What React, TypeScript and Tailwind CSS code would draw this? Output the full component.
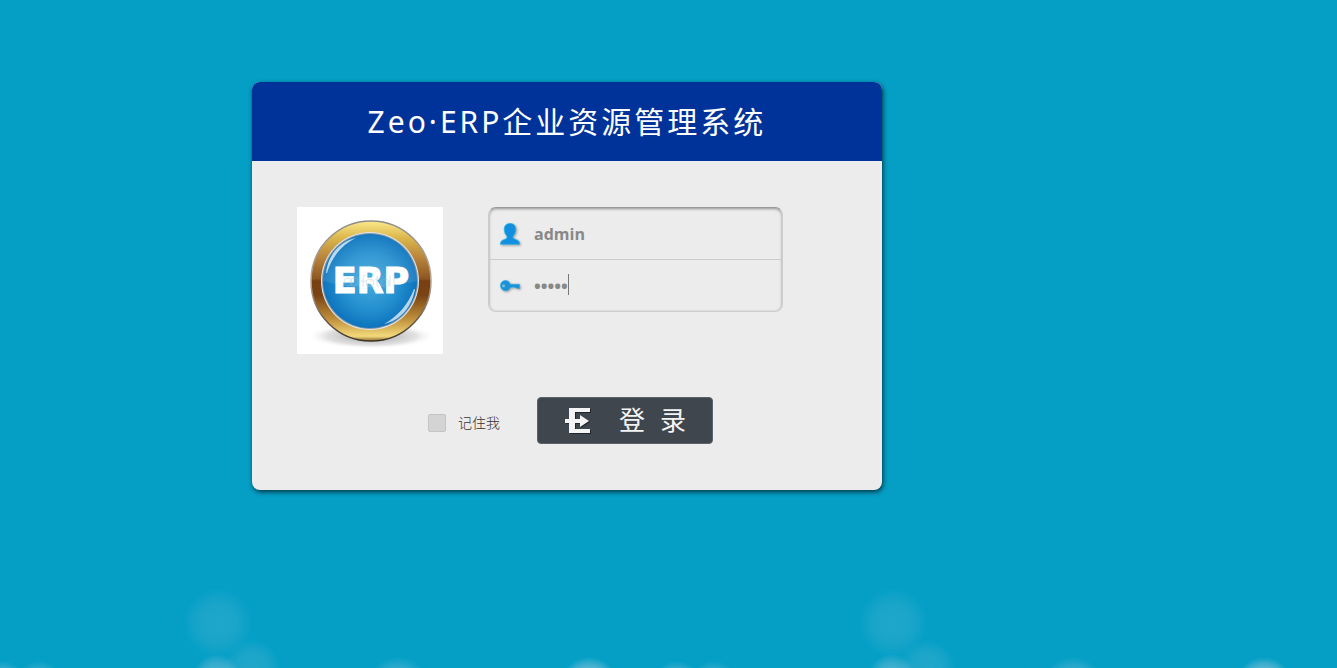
import React, { useState } from 'react';

// Soft light spots, repeated across the bottom of the page
const TILE_WIDTH = 675;

const spots = [
  { cx: 218, cy: 43, r: 34, opacity: 0.15 },
  { cx: 252, cy: 88, r: 28, opacity: 0.16 },
  { cx: 217, cy: 98, r: 24, opacity: 0.38 },
  { cx: 2, cy: 105, r: 24, opacity: 0.36 },
  { cx: 677, cy: 105, r: 24, opacity: 0.36 },
  { cx: 39, cy: 105, r: 24, opacity: 0.3 },
  { cx: 398, cy: 108, r: 31, opacity: 0.34 },
  { cx: 589, cy: 106, r: 29, opacity: 0.65 },
];

function Bokeh() {
  return (
    <svg className="pointer-events-none absolute bottom-0 left-0 -z-10 h-[88px] w-full" aria-hidden="true">
      <defs>
        <radialGradient id="spot">
          <stop offset="0" stopColor="#b4cfe0" />
          <stop offset="0.5" stopColor="#b4cfe0" stopOpacity="0.85" />
          <stop offset="0.75" stopColor="#b4cfe0" stopOpacity="0.5" />
          <stop offset="1" stopColor="#b4cfe0" stopOpacity="0" />
        </radialGradient>
        <pattern id="spots" width={TILE_WIDTH} height="88" patternUnits="userSpaceOnUse">
          {spots.map(spot => (
            <circle key={spot.cx} cx={spot.cx} cy={spot.cy} r={spot.r} fill="url(#spot)" opacity={spot.opacity} />
          ))}
        </pattern>
      </defs>
      <rect width="100%" height="88" fill="url(#spots)" />
    </svg>
  );
}

function ErpLogo() {
  return (
    <svg className="h-[147px] w-[146px] shrink-0 bg-white" viewBox="0 0 146 147" role="img" aria-label="ERP">
      <defs>
        <linearGradient id="ring" x1="0" y1="0" x2="0" y2="1">
          <stop offset="0" stopColor="#fbe88b" />
          <stop offset="0.14" stopColor="#dcb74c" />
          <stop offset="0.32" stopColor="#b5803a" />
          <stop offset="0.48" stopColor="#8f5720" />
          <stop offset="0.5" stopColor="#773f12" />
          <stop offset="0.62" stopColor="#7a4314" />
          <stop offset="0.82" stopColor="#c0913c" />
          <stop offset="0.96" stopColor="#f3d97c" />
          <stop offset="1" stopColor="#8a6a30" />
        </linearGradient>
        <linearGradient id="rim" x1="0" y1="0" x2="0" y2="1">
          <stop offset="0" stopColor="#8c8c8c" />
          <stop offset="0.5" stopColor="#b9a695" />
          <stop offset="1" stopColor="#3d3323" />
        </linearGradient>
        <radialGradient id="disc">
          <stop offset="0" stopColor="#46aadd" />
          <stop offset="0.6" stopColor="#2590cf" />
          <stop offset="1" stopColor="#0d74bd" />
        </radialGradient>
        <radialGradient id="ground">
          <stop offset="0" stopColor="#555555" stopOpacity="0.6" />
          <stop offset="0.7" stopColor="#888888" stopOpacity="0.25" />
          <stop offset="1" stopColor="#ffffff" stopOpacity="0" />
        </radialGradient>
        <linearGradient id="gloss" x1="0" y1="0" x2="0" y2="1">
          <stop offset="0" stopColor="#ffffff" stopOpacity="0.04" />
          <stop offset="1" stopColor="#ffffff" stopOpacity="0.1" />
        </linearGradient>
      </defs>
      <ellipse cx="74" cy="129" rx="64" ry="13" fill="url(#ground)" />
      <circle cx="74" cy="74" r="60" fill="url(#ring)" stroke="url(#rim)" strokeWidth="1.5" />
      <circle cx="73" cy="74" r="49" fill="#dfe4e8" />
      <circle cx="73" cy="74" r="48" fill="#8a99a6" />
      <circle cx="73" cy="74" r="47" fill="url(#disc)" />
      <path d="M26 74a47 47 0 0 1 94 0q-47 12-94 0z" fill="url(#gloss)" />
      <path d="M29 66C31 48 43 34 59 31 46 37 35 49 30 66z" fill="#ffffff" opacity="0.7" />
      <path d="M118 82C115 100 103 114 87 117 100 110 111 98 117 82z" fill="#ffffff" opacity="0.7" />
      <text
        x="74"
        y="86"
        textAnchor="middle"
        fontSize="35"
        fontWeight="700"
        fill="#ffffff"
        stroke="#ffffff"
        strokeWidth="1.2"
        className="font-['DejaVu_Sans']"
      >
        ERP
      </text>
      <g fill="none" stroke="#9fb9cc" strokeWidth="1" opacity="0.35">
        <circle cx="51" cy="75" r="4" />
        <circle cx="57" cy="75" r="4" />
        <path d="M66 80v-9q0-3 3-3M64 74h5M80 69v9q0 2 2 2M78 72h5M93 68v12M97 72v8" />
        <circle cx="73" cy="76" r="4" />
        <circle cx="88" cy="76" r="4" />
      </g>
    </svg>
  );
}

function UserIcon() {
  return (
    <svg className="h-[22px] w-5 shrink-0 drop-shadow-[1px_1px_1px_#00000055]" viewBox="0 0 20 22" aria-hidden="true">
      <path
        d="M10 .5C6.200 .5 4 2.900 4.300 6.800C4.500 9.500 5.500 11.700 7 13V15.200C5 16.400 2.300 16.700 1 18.500C.6 19.200 .5 20.200 .5 21.300H19.500C19.500 20.200 19.400 19.200 19 18.500C17.700 16.700 15 16.400 13 15.200V13C14.500 11.700 15.500 9.500 15.700 6.800C16 2.900 13.800 .5 10 .5Z"
        fill="#128fdf"
        stroke="#1eb6ee"
        strokeWidth="0.7"
      />
    </svg>
  );
}

function KeyIcon() {
  return (
    <svg className="h-[14px] w-5 shrink-0 drop-shadow-[1px_1px_1px_#00000055]" viewBox="0 0 20 14" aria-hidden="true">
      <path
        d="M5.500 1.500C2.500 1.500.5 3.800.5 6.600C.5 9.500 2.600 11.800 5.500 11.800C7.900 11.800 9.600 10.300 10.200 8.400L12 8.400L13 7.800L14 8.400L16 8.400L17 9.500H19.500V5.200H10.200C9.500 3 7.900 1.500 5.500 1.500ZM3.600 5.300A1.500 1.500 0 1 1 3.600 8.300A1.500 1.500 0 1 1 3.600 5.300Z"
        fill="#1b92d8"
        fillRule="evenodd"
        stroke="#25b4ea"
        strokeWidth="0.6"
      />
    </svg>
  );
}

function LoginIcon() {
  return (
    <svg className="h-[26px] w-[26px] drop-shadow-[1px_1px_0px_#20252b]" viewBox="0 0 26 26" fill="#f4f4f4" aria-hidden="true">
      <path d="M4 0h21v4H10v7h5V7l9 6-9 6v-4h-5v6h15v4H4V15H0v-4h4z" />
    </svg>
  );
}

const App: React.FC = () => {
  const [username, setUsername] = useState('admin');
  const [password, setPassword] = useState('admin');
  const [remember, setRemember] = useState(false);

  return (
    <div className="relative isolate min-h-screen bg-[#059fc6] pt-[82px] pb-20 pl-[252px] font-['Noto_Sans','Noto_Sans_CJK_SC',sans-serif]">
      <Bokeh />
      <main className="w-full max-w-[630px] overflow-hidden rounded-lg bg-[#ececec] shadow-[1px_2px_5px_#000000aa]">
        <h1 className="bg-[#003399] py-5 text-center text-3xl leading-[39px] tracking-widest text-white">
          Zeo·ERP企业资源管理系统
        </h1>
        <form className="px-[45px] py-[46px]" onSubmit={e => e.preventDefault()}>
          <div className="flex items-start gap-[45px]">
            <ErpLogo />
            <div className="w-[295px] rounded-lg border border-[#cccccc] border-t-[#999999] shadow-[inset_0_1px_3px_#00000060]">
              <label className="flex h-[52px] items-center gap-[14px] border-b border-[#cccccc] px-[11px]">
                <UserIcon />
                <input
                  type="text"
                  aria-label="用户名"
                  value={username}
                  onChange={e => setUsername(e.target.value)}
                  className="w-full bg-transparent font-['Open_Sans',sans-serif] text-base font-bold text-[#888888] outline-none"
                />
              </label>
              <label className="relative flex h-[51px] items-center gap-[14px] px-[11px]">
                <KeyIcon />
                <input
                  type="password"
                  aria-label="密码"
                  value={password}
                  onChange={e => setPassword(e.target.value)}
                  className="w-full bg-transparent font-['Open_Sans',sans-serif] text-lg font-bold text-[#888888] outline-none"
                />
                {/* Text cursor */}
                <span className="absolute top-[14px] left-[79px] h-[21px] w-px bg-[#777777]" />
              </label>
            </div>
          </div>
          <div className="mt-[43px] flex items-center pl-[131px]">
            <label className="flex items-center gap-3 pt-1 text-sm font-light text-[#333333]">
              <input
                type="checkbox"
                checked={remember}
                onChange={e => setRemember(e.target.checked)}
                className="size-[18px] appearance-none rounded-xs border border-[#c4c4c4] bg-[#d4d4d4] checked:bg-[#40464e]"
              />
              记住我
            </label>
            <button
              type="submit"
              className="ml-[37px] flex h-[47px] w-44 items-center rounded-sm border border-[#5c636b] bg-[#40464e] pl-[27px] text-[26px] text-[#f4f4f4]"
            >
              <LoginIcon />
              <span className="ml-7 flex gap-[15px]">
                <span>登</span> <span>录</span>
              </span>
            </button>
          </div>
        </form>
      </main>
    </div>
  );
};

export default App;
